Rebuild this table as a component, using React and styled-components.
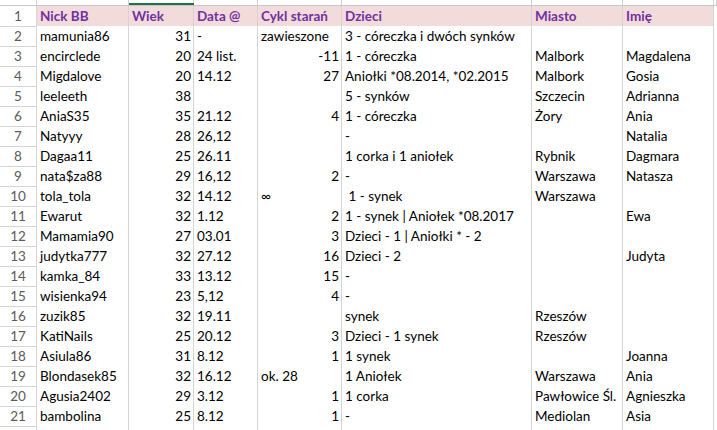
import React from "react";
import styled, { createGlobalStyle } from "styled-components";

const GlobalStyle = createGlobalStyle`
  body {
    margin: 0;
    background: #ffffff;
    font-family: Lato, "Open Sans", sans-serif;
  }
`;

const COLS = "37px 92px 65px 64px 84px 190px 91px 91px 1fr";

const Sheet = styled.div`
  width: 717px;
  height: 430px;
  overflow: hidden;
  background: #ffffff;
`;

const ColumnStrip = styled.div`
  display: grid;
  grid-template-columns: ${COLS};
  height: 6px;
  border-bottom: 1px solid #c6c6c6;
  box-sizing: border-box;
`;

const ColumnHead = styled.div`
  border-right: 1px solid #d0d0d0;
  background: #ffffff;
  position: relative;
  ${(p) =>
    p.$selected &&
    `
    &::after {
      content: "";
      position: absolute;
      left: 0;
      right: -1px;
      bottom: 0;
      height: 2px;
      background: #217346;
    }
  `}
`;

const Row = styled.div`
  display: grid;
  grid-template-columns: ${COLS};
  height: 20px;
`;

const RowNumber = styled.div`
  border-right: 1px solid #d4d4d4;
  border-bottom: 1px solid #d4d4d4;
  color: #5b5b5b;
  font-size: 13.5px;
  line-height: 20px;
  text-align: center;
`;

const Cell = styled.div`
  border-right: 1px solid #d4d4d4;
  border-bottom: 1px solid #d4d4d4;
  background: ${(p) => (p.$head ? "#f2dcdb" : "#ffffff")};
  color: ${(p) => (p.$head ? "#7030a0" : "#000000")};
  font-weight: ${(p) => (p.$head ? 700 : 400)};
  font-size: 13.5px;
  line-height: 20px;
  padding: 0 2px 0 3px;
  text-align: ${(p) => (p.$right ? "right" : "left")};
  white-space: pre;
  overflow: visible;
`;

const header = ["Nick BB", "Wiek", "Data @", "Cykl starań", "Dzieci", "Miasto", "Imię"];

const rows = [
  ["mamunia86", 31, "-", "zawieszone", "3 - córeczka i dwóch synków", "", ""],
  ["encirclede", 20, "24 list.", -11, "1 - córeczka", "Malbork", "Magdalena"],
  ["Migdalove", 20, "14.12", 27, "Aniołki *08.2014, *02.2015", "Malbork", "Gosia"],
  ["leeleeth", 38, "", "", "5 - synków", "Szczecin", "Adrianna"],
  ["AniaS35", 35, "21.12", 4, "1 - córeczka", "Żory", "Ania"],
  ["Natyyy", 28, "26,12", "", "-", "", "Natalia"],
  ["Dagaa11", 25, "26.11", "", "1 corka i 1 aniołek", "Rybnik", "Dagmara"],
  ["nata$za88", 29, "16,12", 2, "-", "Warszawa", "Natasza"],
  ["tola_tola", 32, "14.12", "∞", " 1 - synek", "Warszawa", ""],
  ["Ewarut", 32, "1.12", 2, "1 - synek | Aniołek *08.2017", "", "Ewa"],
  ["Mamamia90", 27, "03.01", 3, "Dzieci - 1 | Aniołki * - 2", "", ""],
  ["judytka777", 32, "27.12", 16, "Dzieci - 2", "", "Judyta"],
  ["kamka_84", 33, "13.12", 15, "-", "", ""],
  ["wisienka94", 23, "5,12", 4, "-", "", ""],
  ["zuzik85", 32, "19.11", "", "synek", "Rzeszów", ""],
  ["KatiNails", 25, "20.12", 3, "Dzieci - 1 synek", "Rzeszów", ""],
  ["Asiula86", 31, "8.12", 1, "1 synek", "", "Joanna"],
  ["Blondasek85", 32, "16.12", "ok. 28", "1 Aniołek", "Warszawa", "Ania"],
  ["Agusia2402", 29, "3.12", 1, "1 corka", "Pawłowice Śl.", "Agnieszka"],
  ["bambolina", 25, "8.12", 1, "-", "Mediolan", "Asia"],
];

export default function App() {
  return (
    <Sheet>
      <GlobalStyle />
      <ColumnStrip>
        {Array.from({ length: 9 }).map((_, i) => (
          <ColumnHead key={i} $selected={i === 2} />
        ))}
      </ColumnStrip>

      <Row>
        <RowNumber>1</RowNumber>
        {header.map((h) => (
          <Cell key={h} $head>
            {h}
          </Cell>
        ))}
        <Cell />
      </Row>

      {rows.map((r, i) => (
        <Row key={r[0]}>
          <RowNumber>{i + 2}</RowNumber>
          {r.map((v, j) => (
            <Cell key={j} $right={typeof v === "number"}>
              {v}
            </Cell>
          ))}
          <Cell />
        </Row>
      ))}

      <Row>
        <RowNumber />
        {header.map((h) => (
          <Cell key={h} />
        ))}
        <Cell />
      </Row>
    </Sheet>
  );
}
